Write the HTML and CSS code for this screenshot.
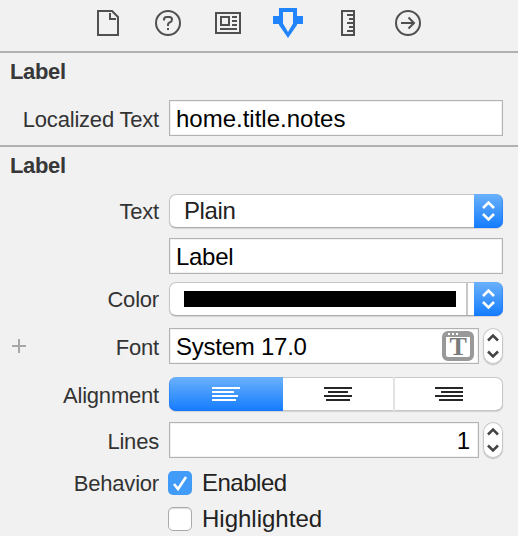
FILE: index.html
```html
<!DOCTYPE html>
<html lang="en">
<head>
<meta charset="utf-8">
<title>Attributes Inspector</title>
<link rel="stylesheet" href="styles.css">
</head>
<body>
<nav class="tabs">
  <svg viewBox="0 0 30 30"><path d="M5 3H19L25 9V27H5Z M17 5V11H23"/></svg>
  <svg viewBox="0 0 30 30"><circle cx="15" cy="15" r="12"/><path d="M11 12.500V11.500Q11 9 13.500 9H16.500Q19 9 19 11.500Q19 13.500 17 14.300Q15 15 15 16.500V18M15 20V22"/></svg>
  <svg viewBox="0 0 30 30"><path d="M3 5H27V25H3Z M8 9H16V17H8Z M19 9H24M19 13H24M19 17H24M7 21H24"/></svg>
  <svg class="active" viewBox="0 0 30 30"><path class="solid" fill-rule="evenodd" d="M6 0H24V8H30V16H24V17L15 30L6 17V16H0V8H6Z M10 4V15.500L15 24L20 15.500V4Z"/></svg>
  <svg viewBox="0 0 30 30"><path d="M9 3H21V27H9Z M14 7H21M16 11H21M14 15H21M16 19H21M14 23H21"/></svg>
  <svg viewBox="0 0 30 30"><circle cx="15" cy="15" r="12"/><path d="M8 15H21M15.500 9.500L21 15L15.500 20.500"/></svg>
</nav>
<section class="localized">
  <h2>Label</h2>
  <div class="row"><span class="name">Localized Text</span><div class="field">home.title.notes</div></div>
</section>
<section class="attributes">
  <h2>Label</h2>
  <div class="row"><span class="name raised">Text</span>
    <div class="popup"><span class="choice">Plain</span><span class="arrows"><svg viewBox="0 0 29 34"><path d="M9 14L14.500 8.500L20 14M9 20L14.500 25.500L20 20"/></svg></span></div></div>
  <div class="row literal"><span class="name"></span><div class="field">Label</div></div>
  <div class="row color"><span class="name raised">Color</span>
    <div class="popup"><span class="well"><i></i></span><span class="arrows"><svg viewBox="0 0 29 34"><path d="M9 14L14.500 8.500L20 14M9 20L14.500 25.500L20 20"/></svg></span></div></div>
  <div class="row font">
    <span class="name"><svg class="plus" viewBox="0 0 14 14"><path d="M0 7H14M7 0V14"/></svg>Font</span>
    <div class="field">System 17.0<span class="fontbutton"><span class="dots"></span><b>T</b></span></div>
    <svg class="stepper" viewBox="0 0 20 36"><path d="M5 12.500L10 7.500L15 12.500M5 23.500L10 28.500L15 23.500"/></svg>
  </div>
  <div class="row align"><span class="name">Alignment</span>
    <div class="segments">
      <span class="selected"><svg viewBox="0 0 28 14"><path d="M0 1H28M0 5H22M0 9H26M0 13H24"/></svg></span>
      <span><svg viewBox="0 0 28 14"><path d="M0 1H28M4 5H24M0 9H28M2 13H26"/></svg></span>
      <span><svg viewBox="0 0 28 14"><path d="M0 1H28M6 5H28M0 9H28M4 13H28"/></svg></span>
    </div></div>
  <div class="row lines"><span class="name">Lines</span><div class="field number">1</div>
    <svg class="stepper" viewBox="0 0 20 36"><path d="M5 12.500L10 7.500L15 12.500M5 23.500L10 28.500L15 23.500"/></svg></div>
  <div class="row behavior"><span class="name raised">Behavior</span><span class="box checked"><svg viewBox="0 0 24 24"><path d="M6 13L10 18L18 6"/></svg></span><span class="option enabled">Enabled</span></div>
  <div class="row highlighted"><span class="name"></span><span class="box"></span><span class="option">Highlighted</span></div>
</section>
</body>
</html>
```

FILE: styles.css
```css
* { box-sizing: border-box; }
body {
  margin: 0;
  height: 536px;
  overflow: hidden;
  background: #f1f1f1;
  color: #333;
  font-family: "Liberation Sans", Arial, sans-serif;
}
svg { display: block; flex: none; fill: none; stroke-width: 2; }
.tabs {
  display: flex;
  gap: 30px;
  height: 51px;
  padding: 8px 0 0 93px;
}
.tabs svg { width: 30px; height: 30px; stroke: #505050; }
.tabs .active { stroke: none; }
.solid { fill: #2184fb; }
section { border-top: 2px solid #b1b1b1; }
.localized { height: 94px; }
h2 {
  height: 47px;
  margin: 0;
  padding: 6px 0 0 10px;
  color: #383838;
  font-size: 22px;
  line-height: 26px;
  letter-spacing: -0.35px;
}
.row { display: flex; height: 36px; padding-right: 15px; }
.attributes .row { height: 34px; }
.name {
  display: flex;
  flex: none;
  justify-content: flex-end;
  align-items: center;
  width: 159px;
  margin-right: 10px;
  padding-top: 3px;
  font-size: 22px;
  letter-spacing: -0.2px;
  white-space: nowrap;
}
.raised { padding-top: 1px; }
.field {
  display: flex;
  flex: 1;
  align-items: center;
  height: 36px;
  padding: 2px 0 0 6px;
  border: 1px solid #b3b3b3;
  background: #fff;
  box-shadow: inset 0 0 0 1px #f2f2f2;
  color: #000;
  font-size: 24px;
}
.popup {
  display: flex;
  flex: 1;
  border: 1px solid #c5c5c5;
  border-bottom-color: #aaa;
  border-right: 0;
  border-radius: 7px;
  background: #fff;
  box-shadow: 0 1px 1px #d5d5d5;
}
.choice { flex: 1; padding: 1px 0 0 14px; font-size: 24px; line-height: 30px; letter-spacing: -0.4px; color: #222; }
.arrows {
  width: 29px;
  height: 34px;
  margin-top: -1px;
  border-radius: 0 7px 7px 0;
  background: linear-gradient(#6ab1fa, #147cff);
  box-shadow: inset -1px -1px #1c70ff66;
}
.arrows svg { height: 34px; stroke: #fff; stroke-width: 2.6; }
.attributes .literal { height: 36px; margin-top: 10px; }
.color { margin-top: 8px; }
.well { flex: 1; margin-right: 6px; padding: 8px 10px 0 14px; border-right: 2px solid #c8c8c8; }
.well i { display: block; height: 16px; background: #000; }
.attributes .font { height: 36px; margin-top: 12px; }
.font .name { position: relative; }
.font .field { letter-spacing: -0.25px; }
.literal .field { letter-spacing: -0.3px; }
.plus { position: absolute; left: 12px; top: 11px; width: 14px; height: 14px; stroke: #a7a7a7; }
.fontbutton {
  display: flex;
  flex-direction: column;
  align-items: center;
  width: 32px;
  height: 30px;
  margin: -2px 4px 0 auto;
  border: 4px solid #999;
  border-top-width: 6px;
  border-radius: 6px;
  background: #fff;
}
.dots { flex: none; width: 10px; height: 2px; margin: -4px 10px 0 0; background: repeating-linear-gradient(90deg, #fff 0 2px, #999 2px 4px); }
.fontbutton b {
  margin-top: 2px;
  color: #7b7b7b;
  font: bold 26px/20px "Liberation Serif", serif;
}
.stepper {
  width: 20px;
  height: 36px;
  margin-left: 4px;
  border-radius: 10px;
  background: #fff;
  box-shadow: 0 0 0 1px #c6c6c6 inset, 0 1px 1px #bbb;
  stroke: #444;
  stroke-width: 2.5;
}
.align { margin-top: 13px; }
.segments {
  display: grid;
  grid-template-columns: 114px 112px 108px;
  flex: 1;
  border-radius: 7px;
  background: #fff;
  box-shadow: inset 0 0 0 1px #c7c7c7, inset 0 -1px #aaa, 0 1px 1px #d2d2d2;
}
.segments span { display: flex; align-items: center; justify-content: center; }
.segments svg { width: 28px; height: 14px; stroke: #262626; }
.segments span:nth-child(2) { border-right: 2px solid #e3e3e3; }
.segments span:nth-child(3) { padding-right: 1px; }
.segments .selected { border-radius: 7px 0 0 7px; background: linear-gradient(#6ab1fa, #147cff); box-shadow: inset 1px -1px #1c70ff66; }
.segments .selected svg { stroke: #fff; }
.attributes .lines { height: 36px; margin-top: 11px; }
.number { justify-content: flex-end; padding-right: 8px; }
.attributes .behavior { height: 24px; margin-top: 13px; }
.attributes .highlighted { height: 24px; margin-top: 12px; }
.box {
  width: 24px;
  height: 24px;
  margin-left: -1px;
  border: 1px solid #aaa;
  border-radius: 5px;
  background: #fff;
  box-shadow: inset 0 1px 1px #ddd;
}
.checked { border: 0; background: #419bf9; box-shadow: none; }
.checked svg { stroke: #fff; stroke-width: 2.6; }
.option { margin-left: 10px; color: #222; font-size: 24px; line-height: 24px; }
.enabled { letter-spacing: -0.5px; }
```
